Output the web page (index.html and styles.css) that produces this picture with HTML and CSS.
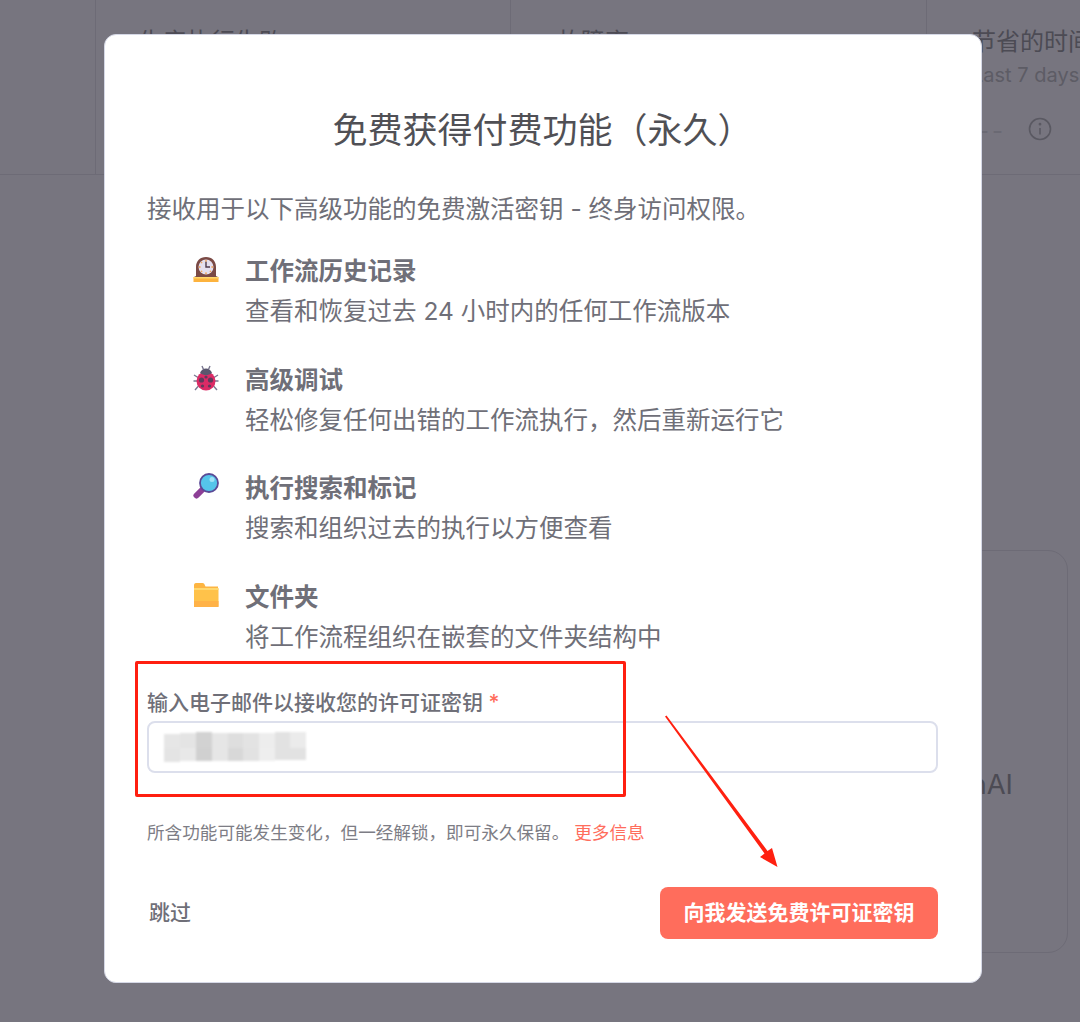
FILE: index.html
```html
<!DOCTYPE html>
<html lang="zh-CN">
<head>
    <meta charset="UTF-8">
    <title>免费获得付费功能</title>
    <link rel="stylesheet" href="styles.css">
</head>
<body>
    <div class="page">
        <div class="stats">
            <div class="stat-gap"></div>
            <div class="stat stat-first">生产执行失败</div>
            <div class="stat stat-mid">故障率</div>
            <div class="stat stat-last">
                <div>节省的时间</div>
                <div class="stat-sub">Last 7 days</div>
                <div class="stat-foot">
                    <span class="stat-dash">--</span>
                    <svg class="info-icon" width="24" height="24" viewBox="0 0 24 24" fill="none" stroke="#5a5962" stroke-width="1.6">
                        <circle cx="12" cy="12" r="10.5"/>
                        <path d="M12 11v6.5"/>
                        <circle cx="12" cy="7.2" r="0.6" fill="#5a5962"/>
                    </svg>
                </div>
            </div>
        </div>
        <div class="lower">
            <div class="side-card"><span class="side-text">OpenAI</span></div>
        </div>
    </div>

    <div class="modal">
        <h1 class="modal-title">免费获得付费功能（永久）</h1>
        <p class="modal-intro">接收用于以下高级功能的免费激活密钥 - 终身访问权限。</p>

        <ul class="features">
            <li class="feature">
                <svg class="feature-icon" width="26" height="26" viewBox="0 0 26 26">
                    <path d="M3 20V11C3 5 7 1 13 1s10 4 10 10v9l2 1v2H1v-2z" fill="#7b4a45"/>
                    <rect x="0.5" y="21" width="25" height="5" fill="#fdb33e"/>
                    <rect x="0.5" y="21" width="25" height="1.5" fill="#ffd76a"/>
                    <circle cx="13" cy="11" r="7.5" fill="#e4dfee"/>
                    <path d="M13 5.5V11h4" fill="none" stroke="#4d3a4c" stroke-width="1.4"/>
                    <g fill="#f2a65a">
                        <circle cx="13" cy="4.8" r="0.9"/>
                        <circle cx="13" cy="17.2" r="0.9"/>
                        <circle cx="6.8" cy="11" r="0.9"/>
                        <circle cx="19.2" cy="11" r="0.9"/>
                        <circle cx="8.6" cy="6.6" r="0.8"/>
                        <circle cx="17.4" cy="15.4" r="0.8"/>
                        <circle cx="8.6" cy="15.4" r="0.8"/>
                    </g>
                </svg>
                <div>
                    <div class="feature-name">工作流历史记录</div>
                    <div class="feature-desc">查看和恢复过去 24 小时内的任何工作流版本</div>
                </div>
            </li>
            <li class="feature">
                <svg class="feature-icon" width="26" height="26" viewBox="0 0 26 26">
                    <g stroke="#7a7790" stroke-width="1.4" fill="none">
                        <path d="M9 1l1.5 3.5M17 1l-1.5 3.5"/>
                        <path d="M1 10l4 2.5M25 10l-4 2.5"/>
                        <path d="M0.5 16H4M25.5 16H22"/>
                        <path d="M2 25l3.5-4M24 25l-3.5-4"/>
                    </g>
                    <ellipse cx="13" cy="16" rx="9.5" ry="9.5" fill="#dc2b66"/>
                    <path d="M7 8c1-3 3.5-4.500 6-4.500S18 5 19 8c-2 1.500-4 2-6 2s-4-.5-6-2z" fill="#5a566e"/>
                    <g fill="#5f3a5c">
                        <circle cx="8.500" cy="15" r="2.600"/>
                        <circle cx="17.500" cy="15" r="2.600"/>
                        <circle cx="13" cy="12" r="1.600"/>
                        <circle cx="9.500" cy="21" r="1.600"/>
                        <circle cx="16.500" cy="21" r="1.600"/>
                    </g>
                </svg>
                <div>
                    <div class="feature-name">高级调试</div>
                    <div class="feature-desc">轻松修复任何出错的工作流执行，然后重新运行它</div>
                </div>
            </li>
            <li class="feature">
                <svg class="feature-icon" width="26" height="26" viewBox="0 0 26 26">
                    <path d="M9 17L3.500 22.500" stroke="#8d3f96" stroke-width="6" stroke-linecap="round"/>
                    <circle cx="16" cy="10" r="9" fill="#55c5ea" stroke="#5a4a96" stroke-width="1.800"/>
                    <circle cx="19" cy="6.500" r="2.500" fill="#9fe3f7"/>
                </svg>
                <div>
                    <div class="feature-name">执行搜索和标记</div>
                    <div class="feature-desc">搜索和组织过去的执行以方便查看</div>
                </div>
            </li>
            <li class="feature">
                <svg class="feature-icon" width="26" height="26" viewBox="0 0 26 26">
                    <path d="M1 3.500C1 2 1.500 1 3 1h6.500c1.500 0 2 1 2.500 2.500l.5 1H25V8H1z" fill="#fdb542"/>
                    <rect x="1" y="6" width="24.500" height="19" rx="1" fill="#ffc24a"/>
                    <rect x="1" y="6" width="24.500" height="2" fill="#ffd86f"/>
                    <rect x="1" y="19" width="24.500" height="6" fill="#ffb247"/>
                </svg>
                <div>
                    <div class="feature-name">文件夹</div>
                    <div class="feature-desc">将工作流程组织在嵌套的文件夹结构中</div>
                </div>
            </li>
        </ul>

        <label class="email-label">输入电子邮件以接收您的许可证密钥 <span class="required">*</span></label>
        <div class="email-input">
            <svg class="email-blur" width="142" height="30" viewBox="0 0 142 30">
                <g>
                    <rect x="0" y="2" width="16" height="14" fill="#e6e6e6"/>
                    <rect x="16" y="1" width="16" height="15" fill="#e4e4e4"/>
                    <rect x="32" y="0" width="16" height="16" fill="#d2d2d2"/>
                    <rect x="48" y="1" width="16" height="15" fill="#e6e6e6"/>
                    <rect x="64" y="1" width="15" height="15" fill="#dedede"/>
                    <rect x="79" y="1" width="16" height="15" fill="#e3e3e3"/>
                    <rect x="95" y="1" width="16" height="15" fill="#ededed"/>
                    <rect x="111" y="0" width="15" height="16" fill="#e2e2e2"/>
                    <rect x="126" y="0" width="16" height="16" fill="#ebebeb"/>
                    <rect x="0" y="16" width="16" height="14" fill="#e4e4e4"/>
                    <rect x="16" y="16" width="16" height="13" fill="#e8e8e8"/>
                    <rect x="32" y="16" width="16" height="13" fill="#d0d0d0"/>
                    <rect x="48" y="16" width="16" height="13" fill="#e6e6e6"/>
                    <rect x="64" y="16" width="15" height="13" fill="#d8d8d8"/>
                    <rect x="79" y="16" width="16" height="13" fill="#e2e2e2"/>
                    <rect x="95" y="16" width="16" height="13" fill="#eeeeee"/>
                    <rect x="111" y="16" width="15" height="12" fill="#e2e2e2"/>
                    <rect x="126" y="16" width="16" height="12" fill="#e2e2e2"/>
                </g>
            </svg>
        </div>
        <p class="modal-note">所含功能可能发生变化，但一经解锁，即可永久保留。 <a class="more-link">更多信息</a></p>

        <div class="modal-footer">
            <button class="btn-skip">跳过</button>
            <button class="btn-send">向我发送免费许可证密钥</button>
        </div>
    </div>

    <div class="mark-box"></div>
    <svg class="mark-arrow" width="1080" height="1022" viewBox="0 0 1080 1022">
        <path d="M665 716.500L666.500 715.500L767.500 851L772 848L777.500 867L760 857L764.500 853.500z" fill="#ff2010"/>
    </svg>
</body>
</html>
```

FILE: styles.css
```css
* {
    box-sizing: border-box;
}
html, body {
    margin: 0;
    padding: 0;
    height: 1022px;
    overflow: hidden;
}
body {
    font-family: Inter, "Noto Sans CJK SC", sans-serif;
    background-color: #77757f;
    color: #4c4b54;
}

/* dimmed page behind the dialog */
.page {
    height: 1022px;
    display: flex;
    flex-direction: column;
}
.stats {
    display: flex;
    height: 175px;
    border-bottom: 1px solid #6d6b76;
    flex-shrink: 0;
}
.stat-gap {
    width: 95px;
}
.stat {
    padding-top: 26px;
    border-left: 1px solid #6d6b76;
    font-size: 24px;
    line-height: 32px;
}
.stat-first {
    width: 415px;
    padding-left: 43px;
}
.stat-mid {
    width: 416px;
    padding-left: 46px;
}
.stat-last {
    flex: 1;
    padding-left: 45px;
    white-space: nowrap;
    overflow: hidden;
}
.stat-sub {
    font-size: 20px;
    line-height: 28px;
    margin-top: 3px;
    color: #5d5c65;
}
.stat-foot {
    display: flex;
    align-items: center;
    justify-content: flex-end;
    margin-top: 21px;
    padding-right: 28px;
}
.stat-dash {
    font-size: 24px;
    letter-spacing: 3px;
    color: #6a6973;
    margin: 5px 22px 0 0;
}
.lower {
    flex: 1;
    display: flex;
    justify-content: flex-end;
    padding: 375px 12px 69px 0;
}
.side-card {
    width: 400px;
    border: 1px solid #6d6b76;
    border-radius: 20px;
    display: flex;
    align-items: center;
    justify-content: flex-end;
    padding: 0 54px 0 0;
}
.side-text {
    font-size: 27.500px;
    margin-top: 64px;
}

/* dialog */
.modal {
    position: absolute;
    top: 34px;
    left: 104px;
    width: 878px;
    height: 949px;
    padding: 0 43px 0 42px;
    background-color: #fff;
    border: 1px solid #d5d8e6;
    border-radius: 12px;
}
.modal-title {
    margin: 70px 0 0;
    font-size: 35px;
    font-weight: 400;
    line-height: 50px;
    text-align: center;
    color: #505055;
}
.modal-intro {
    margin: 36px 0 0;
    font-size: 24.500px;
    line-height: 36px;
    color: #6f6f78;
}
.features {
    list-style: none;
    margin: 24px 0 0;
    padding: 0;
}
.feature {
    display: flex;
    align-items: flex-start;
    height: 108.500px;
    padding-left: 46px;
    color: #6f6f78;
}
.feature-icon {
    margin: 5px 26px 0 0;
    flex-shrink: 0;
}
.feature-name {
    font-size: 24.500px;
    font-weight: 600;
    line-height: 40px;
}
.feature-desc {
    font-size: 24.500px;
    line-height: 40px;
}
.email-label {
    display: block;
    margin-top: 1px;
    font-size: 21px;
    font-weight: 500;
    line-height: 34px;
    color: #6f6f78;
}
.required {
    color: #ff6d5c;
}
.email-input {
    display: flex;
    align-items: center;
    height: 52px;
    margin-top: 1px;
    padding-left: 15px;
    border: 2px solid #dcdfec;
    border-radius: 8px;
    background-color: #fff;
}
.email-blur {
    filter: blur(1px);
}
.modal-note {
    margin: 46px 0 0;
    font-size: 17.600px;
    line-height: 28px;
    color: #7d7d85;
}
.more-link {
    color: #ff6d5c;
}
.modal-footer {
    display: flex;
    align-items: center;
    justify-content: space-between;
    margin-top: 40px;
}
.btn-skip {
    padding: 0 2px 4px;
    border: none;
    background: none;
    font: inherit;
    font-size: 21px;
    font-weight: 500;
    color: #6f6f78;
}
.btn-send {
    width: 278px;
    height: 52px;
    padding: 0 0 4px;
    border: none;
    border-radius: 8px;
    background-color: #ff6d5c;
    font: inherit;
    font-size: 21px;
    font-weight: 600;
    color: #fff;
}

/* red annotations drawn on top of the screenshot */
.mark-box {
    position: absolute;
    left: 135px;
    top: 661px;
    width: 491px;
    height: 136px;
    border: 3px solid #ff1f10;
    border-radius: 2px;
}
.mark-arrow {
    position: absolute;
    left: 0;
    top: 0;
    pointer-events: none;
}
```
